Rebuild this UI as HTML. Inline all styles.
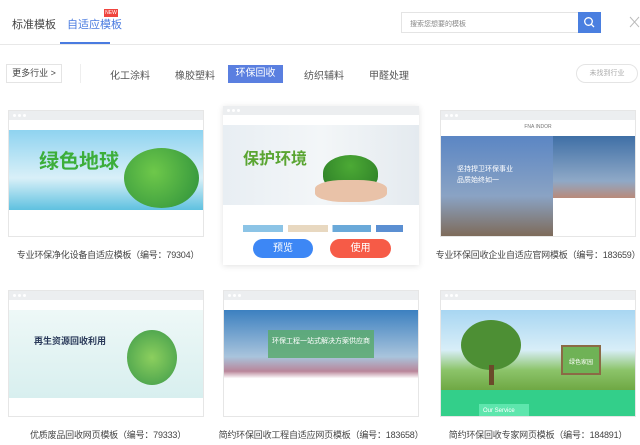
<!DOCTYPE html>
<html><head><meta charset="utf-8"><style>
*{margin:0;padding:0;box-sizing:border-box}
body{width:640px;height:445px;overflow:hidden;background:#fff;font-family:"Liberation Sans","Noto Sans CJK SC",sans-serif;color:#333;position:relative}
.a{position:absolute}
.tab{font-size:11px;top:16px}
.cat{font-size:10px;top:67px;color:#555}
.card{position:absolute;width:196px;height:127px;border:1px solid #e6e6e6;background:#fff;overflow:hidden}
.bar{height:9px;background:#eceef0;position:relative}
.bar i{position:absolute;top:3px;width:3px;height:3px;border-radius:50%;background:#fff}
.nav{height:10px;background:#fff}
.ttl{position:absolute;font-size:9px;color:#444;text-align:center;width:216px;white-space:nowrap;letter-spacing:-0.2px}
</style></head><body>
<div class="a tab" style="left:12px;color:#444">标准模板</div>
<div class="a tab" style="left:67px;color:#4a7be0">自适应模板</div>
<div class="a" style="left:104px;top:9px;width:14px;height:8px;background:#f0453f;color:#fff;font-size:5px;line-height:8px;text-align:center">NEW</div>
<div class="a" style="left:0;top:44px;width:640px;height:1px;background:#e8e8e8"></div>
<div class="a" style="left:60px;top:42px;width:50px;height:2px;background:#4a7be0"></div>
<div class="a" style="left:401px;top:12px;width:178px;height:21px;border:1px solid #e4e4e4;font-size:7px;color:#888;padding:6px 8px">搜索您想要的模板</div>
<div class="a" style="left:578px;top:12px;width:23px;height:21px;background:#4a7fe0"></div>
<svg class="a" style="left:583px;top:16px" width="13" height="13" viewBox="0 0 13 13"><circle cx="5.5" cy="5.5" r="3.8" fill="none" stroke="#fff" stroke-width="1.3"/><path d="M8.3 8.3L11 11" stroke="#fff" stroke-width="1.3"/></svg>
<svg class="a" style="left:629px;top:16px" width="11" height="12"><path d="M1 1L10 11M10 1L1 11" stroke="#bbb" stroke-width="1"/></svg>
<div class="a" style="left:6px;top:64px;width:56px;height:19px;border:1px solid #e4e4e4;font-size:9px;line-height:17px;text-align:center;color:#444">更多行业 &gt;</div>
<div class="a" style="left:80px;top:64px;width:1px;height:19px;background:#eee"></div>
<div class="a cat" style="left:110px">化工涂料</div>
<div class="a cat" style="left:175px">橡胶塑料</div>
<div class="a" style="left:228px;top:65px;width:55px;height:18px;background:#5a7fe0;color:#fff;font-size:10px;line-height:18px;text-align:center">环保回收</div>
<div class="a cat" style="left:304px">纺织辅料</div>
<div class="a cat" style="left:369px">甲醛处理</div>
<div class="a" style="left:576px;top:64px;width:62px;height:19px;border:1px solid #e4e4e4;border-radius:10px;font-size:7px;line-height:17px;text-align:center;color:#aaa">未找到行业</div>

<!-- row1 -->
<div class="card" style="left:8px;top:110px"><div class="bar"><i style="left:4px"></i><i style="left:9px"></i><i style="left:14px"></i></div><div class="nav"></div>
<div style="height:80px;background:linear-gradient(180deg,#8fd3f0,#d9f0f8 60%,#5fc1e0);position:relative"><div class="a" style="left:30px;top:15px;font-size:20px;font-weight:bold;color:#3cae3a">绿色地球</div><div class="a" style="left:115px;top:18px;width:75px;height:60px;border-radius:50%;background:radial-gradient(circle at 40% 40%,#6ec84a,#2b8f3b)"></div></div>
<div style="height:28px;background:#fff"></div></div>
<div class="ttl" style="left:0;top:248px">专业环保净化设备自适应模板（编号：79304）</div>

<div class="a" style="left:223px;top:106px;width:196px;height:159px;background:#fff;box-shadow:0 1px 6px rgba(0,0,0,.12)"></div>
<div class="card" style="left:223px;top:106px;border:none;height:126px"><div class="bar"><i style="left:4px"></i><i style="left:9px"></i><i style="left:14px"></i></div><div class="nav"></div>
<div style="height:80px;background:linear-gradient(90deg,#e8eef3,#f3f6f8 50%,#e4eaef);position:relative"><div class="a" style="left:20px;top:20px;font-size:16px;font-weight:bold;color:#5aa532">保护环境</div><div class="a" style="left:100px;top:30px;width:55px;height:36px;border-radius:50% 50% 40% 40%;background:radial-gradient(circle at 50% 30%,#4caa35,#2c7d27)"></div><div class="a" style="left:92px;top:55px;width:72px;height:22px;border-radius:40%;background:#e9c2a8"></div></div>
<div style="height:27px;background:#fff;position:relative"><div class="a" style="left:20px;top:20px;width:160px;height:7px;background:linear-gradient(90deg,#8cc4e6 25%,#fff 25%,#fff 28%,#e8d8c0 28%,#e8d8c0 53%,#fff 53%,#fff 56%,#6aa9d9 56%,#6aa9d9 80%,#fff 80%,#fff 83%,#5b8fd2 83%)"></div></div></div>
<div class="a" style="left:253px;top:239px;width:60px;height:19px;border-radius:10px;background:#3d87f5;color:#fff;font-size:10px;line-height:19px;text-align:center">预览</div>
<div class="a" style="left:330px;top:239px;width:61px;height:19px;border-radius:10px;background:#f65b47;color:#fff;font-size:10px;line-height:19px;text-align:center">使用</div>

<div class="card" style="left:440px;top:110px"><div class="bar"><i style="left:4px"></i><i style="left:9px"></i><i style="left:14px"></i></div><div style="height:16px;background:#fff;font-size:5px;text-align:center;color:#777;padding-top:4px">FNA INDOR</div>
<div style="height:100px;display:flex"><div style="width:112px;background:linear-gradient(180deg,#5b86c4,#8aa3c4 60%,#7e6b5a);position:relative"><div class="a" style="left:16px;top:28px;font-size:7px;color:#fff;line-height:11px">坚持捍卫环保事业<br>品质始终如一</div></div><div style="flex:1;background:linear-gradient(180deg,#3f6fa6 0,#8fa9c7 45%,#b98a7a 62%,#fff 62%)"></div></div></div>
<div class="ttl" style="left:430px;top:248px">专业环保回收企业自适应官网模板（编号：183659）</div>

<!-- row2 -->
<div class="card" style="left:8px;top:290px"><div class="bar"><i style="left:4px"></i><i style="left:9px"></i><i style="left:14px"></i></div><div class="nav"></div>
<div style="height:88px;background:linear-gradient(180deg,#eef8f7,#d8efef);position:relative"><div class="a" style="left:25px;top:24px;font-size:9px;font-weight:bold;color:#2a3a5a">再生资源回收利用</div><div class="a" style="left:118px;top:20px;width:50px;height:55px;border-radius:50%;background:radial-gradient(circle,#8ccf5e,#3d9a4a)"></div></div><div style="height:20px;background:#fff"></div></div>
<div class="ttl" style="left:0;top:428px">优质废品回收网页模板（编号：79333）</div>

<div class="card" style="left:223px;top:290px"><div class="bar"><i style="left:4px"></i><i style="left:9px"></i><i style="left:14px"></i></div><div class="nav"></div>
<div style="height:72px;background:linear-gradient(180deg,#3c80c0,#a9c4dc 65%,#b9869a 85%,#fff 95%);position:relative"><div class="a" style="left:44px;top:20px;width:106px;height:28px;background:rgba(90,170,110,.85);color:#fff;font-size:7px;text-align:center;padding-top:6px">环保工程一站式解决方案供应商</div></div><div style="height:36px;background:#fff"></div></div>
<div class="ttl" style="left:213px;top:428px">简约环保回收工程自适应网页模板（编号：183658）</div>

<div class="card" style="left:440px;top:290px"><div class="bar"><i style="left:4px"></i><i style="left:9px"></i><i style="left:14px"></i></div><div class="nav"></div>
<div style="height:80px;background:linear-gradient(180deg,#a8d6f2,#d8eef8 50%,#8cc46a 75%,#6fa844);position:relative"><div class="a" style="left:20px;top:10px;width:60px;height:50px;border-radius:50%;background:#4d8f34"></div><div class="a" style="left:48px;top:55px;width:5px;height:20px;background:#6b4a2a"></div><div class="a" style="left:120px;top:35px;width:40px;height:30px;background:#6fb256;border:2px solid #8b6a45;color:#fff;font-size:6px;text-align:center;padding-top:10px">绿色家园</div></div>
<div style="height:28px;background:#33cf8a;position:relative"><div class="a" style="left:38px;top:14px;width:50px;height:14px;background:#5ee6ad;color:#fff;font-size:6px;padding:4px">Our Service</div></div></div>
<div class="ttl" style="left:430px;top:428px">简约环保回收专家网页模板（编号：184891）</div>
</body></html>
